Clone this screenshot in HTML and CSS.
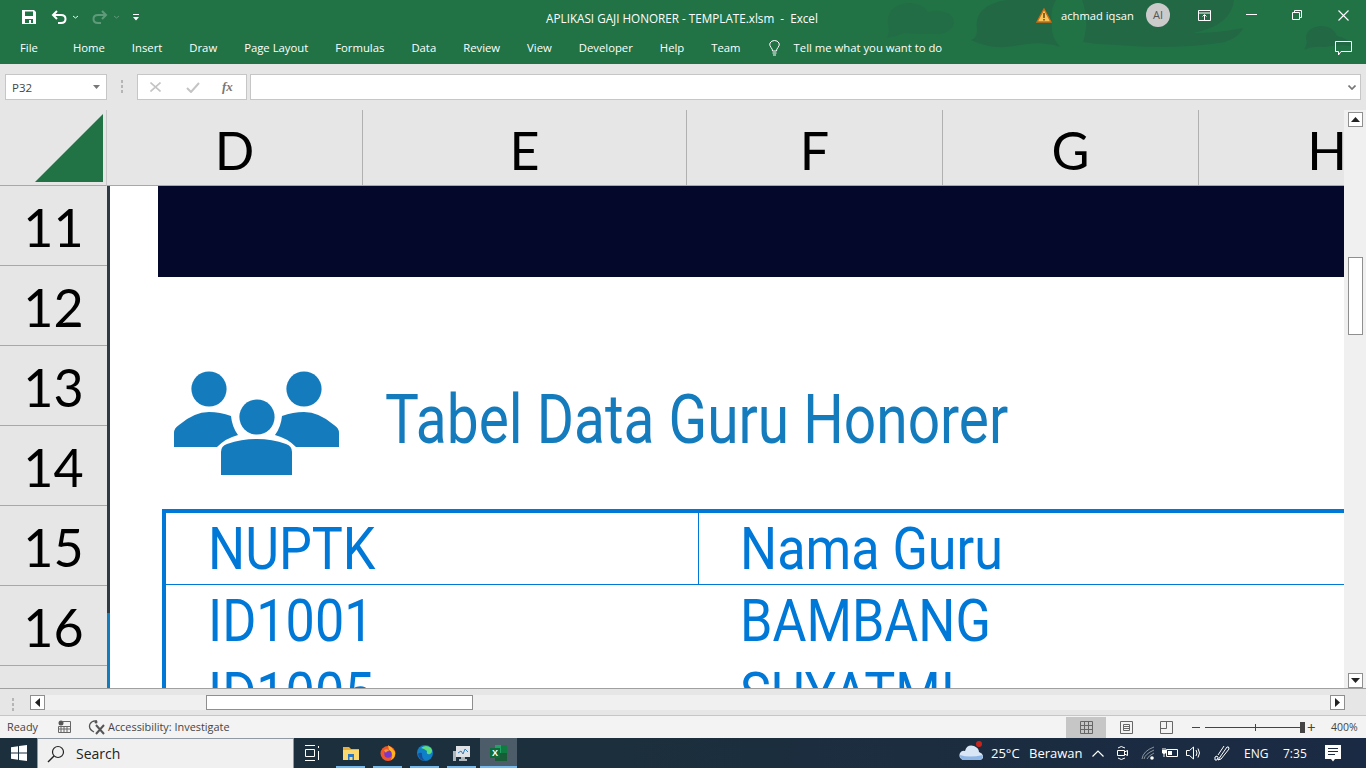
FILE: index.html
```html
<!DOCTYPE html>
<html lang="en">
<head>
<meta charset="utf-8">
<title>APLIKASI GAJI HONORER - TEMPLATE.xlsm - Excel</title>
<link rel="stylesheet" href="styles.css">
</head>
<body>
<div class="app">
  <header class="ribbon">
    <svg class="blobs" width="1366" height="64" viewBox="0 0 1366 64">
      <path class="blob-faint" d="M887 38Q890 32 888 24Q886 6 908 3Q922 3 928 12Q945 8 953 18Q957 30 940 34Q915 34 904 33Q895 37 887 38Z"/>
      <path d="M971 40Q977 38 977 30Q974 12 992 4Q1005 -2 1025 0H1056Q1050 10 1052 22Q1050 36 1060 47Q1040 40 1015 46Q990 50 971 40Z"/>
      <path d="M1082 0H1234Q1232 25 1193 33Q1220 33 1243 28Q1240 37 1225 42Q1180 50 1116 45Q1100 45 1083 42Q1090 20 1082 0Z"/>
      <path d="M1304 50Q1308 44 1306 38Q1306 28 1320 26Q1333 25 1337 36Q1348 38 1352 46Q1340 44 1325 47Q1312 46 1304 50Z"/>
    </svg>
    <div class="qat">
      <svg class="q-save" width="16" height="16" viewBox="0 0 16 16"><path fill="#fff" d="M1 1H13L15 3V15H1Z"/><path fill="#217346" d="M4 2.500H12V7H4ZM4 10H12V14H10V11H8V14H4Z"/></svg>
      <svg class="q-undo" width="16" height="14" viewBox="0 0 16 14"><path fill="none" stroke="#fff" stroke-width="2" d="M6 1L2 5L6 9M2 5H10Q14.500 5 14.500 9Q14.500 13 10 13H7"/></svg>
      <svg class="q-caret" width="5" height="4" viewBox="0 0 5 4"><path fill="none" stroke="#dfe" stroke-width="1" d="M0 1L2.500 3L5 1"/></svg>
      <svg class="q-redo" width="16" height="14" viewBox="0 0 16 14"><path fill="none" stroke="#5f9a7b" stroke-width="2" d="M10 1L14 5L10 9M14 5H6Q1.500 5 1.500 9Q1.500 13 6 13H9"/></svg>
      <svg class="q-caret2" width="5" height="4" viewBox="0 0 5 4"><path fill="none" stroke="#5f9a7b" stroke-width="1" d="M0 1L2.500 3L5 1"/></svg>
      <svg class="q-more" width="6" height="7" viewBox="0 0 6 7"><path fill="#fff" d="M0 0H6V1H0ZM0 3H6L3 6.500Z"/></svg>
    </div>
    <div class="title">APLIKASI GAJI HONORER - TEMPLATE.xlsm&nbsp; - &nbsp;Excel</div>
    <div class="account">
      <svg class="warn" width="16" height="15" viewBox="0 0 16 15"><path fill="#f6c65b" stroke="#cf6a12" stroke-width="1.400" d="M8 1L15 14H1Z"/><path fill="#5a3a10" d="M7.300 5H8.700V10H7.300ZM7.300 11H8.700V12.500H7.300Z"/></svg>
      <span class="user">achmad iqsan</span>
      <span class="avatar">AI</span>
      <svg class="w-display" width="13" height="11" viewBox="0 0 13 11"><path fill="none" stroke="#fff" d="M.5 .5H12.500V10.500H.5ZM.5 3H12.500M6.500 10V5M4.500 6.500L6.500 4.500L8.500 6.500"/></svg>
      <svg class="w-min" width="11" height="1" viewBox="0 0 11 1"><path fill="#fff" d="M0 0H11V1H0Z"/></svg>
      <svg class="w-restore" width="10" height="10" viewBox="0 0 10 10"><path fill="none" stroke="#fff" d="M.5 2.500H7.500V9.500H.5ZM2.500 2.500V.5H9.500V7.500H7.500"/></svg>
      <svg class="w-close" width="11" height="11" viewBox="0 0 11 11"><path fill="none" stroke="#fff" stroke-width="1.100" d="M.5 .5L10.500 10.500M10.500 .5L.5 10.500"/></svg>
    </div>
    <nav class="tabs">
      <span class="tab tab-file">File</span>
      <span class="tab">Home</span>
      <span class="tab">Insert</span>
      <span class="tab">Draw</span>
      <span class="tab">Page Layout</span>
      <span class="tab">Formulas</span>
      <span class="tab">Data</span>
      <span class="tab">Review</span>
      <span class="tab">View</span>
      <span class="tab">Developer</span>
      <span class="tab">Help</span>
      <span class="tab">Team</span>
      <svg class="bulb" width="13" height="16" viewBox="0 0 13 16"><path fill="none" stroke="#fff" d="M4.500 11Q4.500 9 3 7.500Q1 5 2 3Q3.500 .5 6.500 .5Q9.500 .5 11 3Q12 5 10 7.500Q8.500 9 8.500 11ZM4.500 13H8.500M5 15H8"/></svg>
      <span class="tab tab-tell">Tell me what you want to do</span>
    </nav>
    <svg class="comment" width="17" height="15" viewBox="0 0 17 15"><path fill="none" stroke="#fff" d="M.5 .5H16.500V10.500H6L3.500 14V10.500H.5Z"/></svg>
  </header>

  <section class="formula">
    <div class="namebox"><span>P32</span><svg width="7" height="4" viewBox="0 0 7 4"><path fill="#777" d="M0 0H7L3.500 4Z"/></svg></div>
    <div class="grip"><i></i><i></i><i></i></div>
    <div class="fx-box">
      <svg width="11" height="10" viewBox="0 0 11 10"><path fill="none" stroke="#c4c4c4" stroke-width="1.600" d="M.5 .5L10.500 9.500M10.500 .5L.5 9.500"/></svg>
      <svg width="14" height="11" viewBox="0 0 14 11"><path fill="none" stroke="#c4c4c4" stroke-width="2" d="M1 6L5 10L13 1"/></svg>
      <span class="fx">fx</span>
    </div>
    <div class="input"><svg width="8" height="5" viewBox="0 0 8 5"><path fill="none" stroke="#777" stroke-width="1.700" d="M.5 .5L4 4L7.500 .5"/></svg></div>
  </section>

  <section class="workbook">
    <div class="corner"><svg width="68" height="68" viewBox="0 0 68 68"><path fill="#217346" d="M68 0V68H0Z"/></svg></div>
    <div class="columns">
      <div class="col col-d">D</div>
      <div class="col col-e">E</div>
      <div class="col col-f">F</div>
      <div class="col col-g">G</div>
      <div class="col col-h">H</div>
    </div>
    <div class="vscroll">
      <button class="sbtn"><svg width="9" height="5" viewBox="0 0 9 5"><path fill="#222" d="M4.500 0L9 5H0Z"/></svg></button>
      <div class="vthumb"></div>
      <button class="sbtn sbtn-bottom"><svg width="9" height="5" viewBox="0 0 9 5"><path fill="#222" d="M4.500 5L9 0H0Z"/></svg></button>
    </div>
    <div class="rows">
      <div class="row">11</div>
      <div class="row">12</div>
      <div class="row">13</div>
      <div class="row">14</div>
      <div class="row">15</div>
      <div class="row">16</div>
      <div class="row"></div>
    </div>
    <div class="sheet">
      <div class="band"></div>
      <div class="heading">
        <svg class="people" width="170" height="106" viewBox="0 0 170 106">
          <g fill="#147bbd">
            <circle cx="37" cy="18" r="17.600"/>
            <circle cx="132" cy="18" r="17.600"/>
            <circle cx="85" cy="46" r="17.600"/>
            <path d="M2 76V62Q2 57 7 54Q22 41 37 41Q48 41 59 45Q60 56 66 64Q54 67 45 76Z"/>
            <path d="M167 76V62Q167 57 162 54Q147 41 132 41Q121 41 110 45Q109 56 103 64Q115 67 124 76Z"/>
            <path d="M49 104V81Q49 75 55 73Q70 68 85 68Q100 68 114 73Q120 75 120 81V104Z"/>
          </g>
        </svg>
        <h1 class="h-title">Tabel Data Guru Honorer</h1>
      </div>
      <div class="table">
        <div class="t-row t-head">
          <div class="cell cell-a"><span>NUPTK</span></div>
          <div class="cell cell-b"><span>Nama Guru</span></div>
        </div>
        <div class="t-row">
          <div class="cell cell-a"><span>ID1001</span></div>
          <div class="cell cell-b"><span>BAMBANG</span></div>
        </div>
        <div class="t-row">
          <div class="cell cell-a"><span>ID1005</span></div>
          <div class="cell cell-b"><span>SUYATMI</span></div>
        </div>
      </div>
    </div>
  </section>

  <section class="hbar">
    <div class="grip grip-h"><i></i><i></i><i></i></div>
    <div class="htrack">
      <button class="sbtn"><svg width="5" height="9" viewBox="0 0 5 9"><path fill="#222" d="M0 4.500L5 0V9Z"/></svg></button>
      <div class="hthumb"></div>
      <button class="sbtn sbtn-right"><svg width="5" height="9" viewBox="0 0 5 9"><path fill="#222" d="M5 4.500L0 0V9Z"/></svg></button>
    </div>
  </section>

  <footer class="status">
    <span class="ready">Ready</span>
    <svg class="st-macro" width="13" height="13" viewBox="0 0 13 13"><circle cx="3" cy="3" r="2.500" fill="#555"/><path fill="none" stroke="#666" d="M5 1.500H12.500V12.500H.5V6.500H12.500M3 7V12M6 7V12M9 7V12M1 9H12"/></svg>
    <svg class="st-acc" width="18" height="16" viewBox="0 0 18 16"><path fill="none" stroke="#555" stroke-width="1.300" d="M9 2Q4 1 2 5Q0 10 6 13"/><circle cx="8" cy="3" r="1.500" fill="#555"/><path fill="none" stroke="#555" stroke-width="2" d="M8 6L16 15M16 6L8 15"/></svg>
    <span class="acc-text">Accessibility: Investigate</span>
    <div class="views">
      <span class="view view-on"><svg width="13" height="13" viewBox="0 0 13 13"><path fill="none" stroke="#666" d="M.5 .5H12.500V12.500H.5ZM4.500 .5V12.500M8.500 .5V12.500M.5 4.500H12.500M.5 8.500H12.500"/></svg></span>
      <span class="view"><svg width="13" height="13" viewBox="0 0 13 13"><path fill="none" stroke="#666" d="M.5 .5H12.500V12.500H.5ZM3.500 3.500H9.500V9.500H3.500ZM3.500 5.500H9.500M3.500 7.500H9.500"/></svg></span>
      <span class="view"><svg width="13" height="13" viewBox="0 0 13 13"><path fill="none" stroke="#666" d="M.5 .5H12.500V12.500H.5ZM6.500 .5V7.500H.5"/></svg></span>
    </div>
    <span class="z-minus"></span>
    <div class="slider"><i class="s-tick"></i><i class="s-thumb"></i></div>
    <span class="z-plus">+</span>
    <span class="zoom">400%</span>
  </footer>

  <footer class="taskbar">
    <div class="start"><svg width="16" height="16" viewBox="0 0 16 16"><path fill="#fff" d="M0 2.300L7 1.300V7.500H0ZM8 1.100L16 0V7.500H8ZM0 8.500H7V14.700L0 13.700ZM8 8.500H16V16L8 14.900Z"/></svg></div>
    <div class="search">
      <svg width="18" height="18" viewBox="0 0 18 18"><circle cx="11" cy="7" r="5.500" fill="none" stroke="#222" stroke-width="1.200"/><path stroke="#222" stroke-width="1.400" d="M7 11L1 17"/></svg>
      <span>Search</span>
    </div>
    <div class="task-view"><svg width="17" height="16" viewBox="0 0 17 16"><path fill="none" stroke="#fff" d="M2 .5H12M2.500 4.500H11.500V11.500H2.500ZM2 15.500H12M15.500 1V3M15.500 6V15"/></svg></div>
    <div class="apps">
      <span class="app-i"><svg width="16" height="15" viewBox="0 0 16 15"><path fill="#e8b03a" d="M0 1H6L8 3H16V14H0Z"/><path fill="#fbd96f" d="M0 4H16V14H0Z"/><path fill="#2a76c4" d="M5 8H11V14H9.500V11H6.500V14H5Z"/></svg></span>
      <span class="app-i"><svg width="16" height="16" viewBox="0 0 16 16"><circle cx="8" cy="8.500" r="7.500" fill="#f0552b"/><path fill="#ffb61e" d="M8 0Q13 3 15 7Q16 12 11 15Q14 9 9 5Z"/><circle cx="8" cy="9" r="3.700" fill="#7b37c9"/><path fill="#ff9a2a" d="M4 5Q8 3 9 6Q6 6 6 8Z"/></svg></span>
      <span class="app-i"><svg width="16" height="16" viewBox="0 0 16 16"><circle cx="8" cy="8" r="8" fill="#0f7fc8"/><path fill="#5fdc7e" d="M4 3Q9 -1 14 3Q16.500 7 13 9Q9 10 10 6Q7 3.500 4 3Z"/><path fill="#1a4f9a" d="M1 9Q2 15 9 16Q4 13 5 8Q2 7 1 9Z"/></svg></span>
      <span class="app-i"><svg width="17" height="15" viewBox="0 0 17 15"><path fill="#dfe3e6" d="M3 0H17V11H3Z"/><path fill="none" stroke="#2f7cc0" d="M5 7L8 5L10 8L12 3L15 6"/><path fill="#aeb6bb" d="M0 5H3V15H0ZM8 11H12V13H14V15H6V13H8Z"/></svg></span>
      <span class="app-i app-on"><svg width="17" height="16" viewBox="0 0 17 16"><path fill="#21a366" d="M5 0H17V16H5Z"/><path fill="#107c41" d="M11 0H17V8H11Z"/><path fill="#185c37" d="M5 8H17V16H5Z"/><path fill="#0f6b3a" d="M0 3H10V13H0Z"/><text class="x-text" x="5" y="11.300">X</text></svg></span>
    </div>
    <div class="tray">
      <svg class="tr-cloud" width="24" height="20" viewBox="0 0 24 20"><circle cx="20" cy="3" r="3" fill="#c8241c"/><path fill="#d9e6f5" d="M4 19Q-1 17 1 12Q3 9 6 10Q8 3 15 5Q20 7 20 11Q25 13 24 17Q23 19 20 19Z"/><path fill="#8fb7e6" d="M1 14Q10 17 24 14Q24 19 20 19H4Q1 18 1 14Z"/></svg>
      <span class="tr-temp">25°C</span>
      <span class="tr-wx">Berawan</span>
      <svg class="tr-caret" width="12" height="7" viewBox="0 0 12 7"><path fill="none" stroke="#fff" stroke-width="1.200" d="M.5 6.500L6 1L11.500 6.500"/></svg>
      <svg class="tr-meet" width="11" height="16" viewBox="0 0 11 16"><path fill="none" stroke="#fff" d="M.5 5.500H7.500V10.500H.5ZM7.500 7L10.500 5.500V10.500L7.500 9M1 3Q4 0 8 3M1 13Q4 16 8 13"/></svg>
      <svg class="tr-wifi" width="14" height="14" viewBox="0 0 14 14"><g fill="none" stroke="#8a949c"><path d="M1 13Q2 5 13 1M3 13Q4 8 13 4M6 13Q7 10 13 7"/></g><circle cx="11" cy="12" r="1.800" fill="#fff"/></svg>
      <svg class="tr-batt" width="16" height="12" viewBox="0 0 16 12"><path fill="none" stroke="#fff" d="M4.500 2.500H15.500V9.500H4.500ZM1 3V1M3 3V1"/><path fill="#fff" d="M0 3H4V6L2.500 7V10H1.500V7L0 6ZM6 4H10V8H6Z"/></svg>
      <svg class="tr-vol" width="16" height="14" viewBox="0 0 16 14"><path fill="none" stroke="#fff" d="M.5 4.500H3.500L7.500 1V13L3.500 9.500H.5ZM10 4Q12 7 10 10M12 2.500Q15 7 12 11.500"/></svg>
      <svg class="tr-pen" width="16" height="16" viewBox="0 0 16 16"><path fill="none" stroke="#fff" d="M4 15L13 2Q15 1 15 4L7 14ZM10 1L4 10M1 15Q0 11 3 11Q5 12 3 15H1"/></svg>
      <span class="tr-lang">ENG</span>
      <span class="tr-time">7:35</span>
      <svg class="tr-note" width="16" height="17" viewBox="0 0 16 17"><path fill="#fff" d="M0 0H16V14H10L8 16.500L6 14H0Z"/><path fill="#1c2b40" d="M3 3H13V4H3ZM3 6H13V7H3ZM3 9H10V10H3Z"/></svg>
    </div>
  </footer>
</div>
</body>
</html>
```
FILE: styles.css
```css
* { box-sizing: border-box; }
html, body { margin: 0; padding: 0; height: 100%; overflow: hidden; background: #e6e6e6; }
button { padding: 0; font: inherit; }
svg { display: block; flex: none; }

.app {
  width: 1366px;
  height: 768px;
  display: flex;
  flex-direction: column;
  font-family: "Open Sans", "Noto Sans", sans-serif;
  overflow: hidden;
}

/* Ribbon */
.ribbon {
  position: relative;
  height: 64px;
  flex: none;
  background: #217346;
  color: #fff;
  overflow: hidden;
}
.blobs { position: absolute; left: 0; top: 0; fill: #236844; }
.blob-faint { fill: #226d45; }
.qat {
  position: absolute;
  left: 21px;
  top: 9px;
  display: flex;
  align-items: center;
  height: 16px;
}
.q-undo { margin-left: 14px; }
.q-caret { margin-left: 6px; }
.q-redo { margin-left: 14px; }
.q-caret2 { margin-left: 6px; }
.q-more { margin-left: 14px; }
.title {
  position: absolute;
  left: 0;
  right: 0;
  top: 9px;
  text-align: center;
  font-size: 11.700px;
  line-height: 18px;
  padding-right: 2px;
}
.account {
  position: absolute;
  left: 1036px;
  top: 3px;
  height: 24px;
  display: flex;
  align-items: center;
}
.user { font-size: 11.200px; margin-left: 9px; width: 74px; white-space: nowrap; }
.avatar {
  width: 24px;
  height: 24px;
  margin-left: 11px;
  border-radius: 50%;
  background: #cbcbcb;
  color: #555;
  font-size: 11px;
  line-height: 24px;
  text-align: center;
}
.w-display { margin-left: 28px; }
.w-min { margin-left: 35px; margin-top: -2px; }
.w-restore { margin-left: 35px; }
.w-close { margin-left: 36px; }
.tabs {
  position: absolute;
  left: 20px;
  top: 38px;
  display: flex;
  align-items: center;
  gap: 27px;
  height: 18px;
  font-size: 11.300px;
  white-space: nowrap;
}
.tab-file { margin-right: 8px; }
.bulb { margin-top: 2px; }
.tab-tell { margin-left: -14px; }
.comment { position: absolute; left: 1335px; top: 41px; }

/* Formula bar */
.formula {
  height: 46px;
  flex: none;
  background: #e6e6e6;
  display: flex;
  align-items: flex-start;
  padding: 10px 5px 0;
}
.namebox {
  width: 102px;
  height: 26px;
  background: #fff;
  border: 1px solid #c6c6c6;
  display: flex;
  align-items: center;
  justify-content: space-between;
  padding: 0 6px;
  font-size: 11.500px;
  color: #444;
}
.grip {
  width: 3px;
  display: flex;
  flex-direction: column;
  gap: 2px;
  margin: 6px 13px 0 14px;
}
.grip i { display: block; width: 2px; height: 3px; background: #b5b5b5; }
.fx-box {
  width: 110px;
  height: 26px;
  background: #fff;
  border: 1px solid #c6c6c6;
  display: flex;
  align-items: center;
  gap: 25px;
  padding: 0 12px;
}
.fx { font: italic bold 13px "Liberation Serif", serif; color: #777; margin-left: -3px; }
.input {
  width: 1111px;
  height: 26px;
  margin-left: 3px;
  background: #fff;
  border: 1px solid #c6c6c6;
  display: flex;
  align-items: center;
  justify-content: flex-end;
  padding-right: 4px;
}

/* Workbook grid */
.workbook {
  height: 578px;
  flex: none;
  display: grid;
  grid-template-columns: 107px 1237px 22px;
  grid-template-rows: 76px 502px;
  background: #e6e6e6;
  overflow: hidden;
}
.corner {
  border-bottom: 1px solid #a8a8a8;
  border-right: 1px solid #c9c9c9;
  display: flex;
  justify-content: flex-end;
  align-items: flex-end;
  padding: 0 3px 3px 0;
}
.columns {
  display: flex;
  overflow: hidden;
  border-bottom: 1px solid #a8a8a8;
  font-family: "Lato", "Open Sans", sans-serif;
  font-size: 52px;
  line-height: 80px;
  color: #000;
}
.col {
  flex: none;
  text-align: center;
  border-right: 1px solid #b0b0b0;
}
.col-d { width: 256px; }
.col-e { width: 324px; }
.col-f { width: 256px; }
.col-g { width: 256px; }
.col-h { width: 256px; border-right: 0; }
.vscroll {
  grid-row: 1 / 3;
  grid-column: 3;
  position: relative;
  background: #f0f0f0;
}
.sbtn {
  display: flex;
  align-items: center;
  justify-content: center;
  width: 15px;
  height: 15px;
  background: #fff;
  border: 1px solid #8f8f8f;
}
.vscroll .sbtn { position: absolute; left: 4px; top: 2px; }
.vscroll .sbtn-bottom { top: auto; bottom: 0; }
.vthumb {
  position: absolute;
  left: 4px;
  top: 147px;
  width: 15px;
  height: 78px;
  background: #fff;
  border: 1px solid #8f8f8f;
}
.rows {
  overflow: hidden;
  font-family: "Lato", "Open Sans", sans-serif;
  font-size: 52px;
  color: #000;
}
.row {
  height: 80px;
  line-height: 82px;
  text-align: center;
  border-bottom: 1px solid #a8a8a8;
}
.sheet {
  background: #fff;
  overflow: hidden;
  border-left: 3px solid #2e3a44;
  border-image: linear-gradient(#2e3a44 426px, #147bbd 426px) 1;
  border-top: 0;
  border-right: 0;
  border-bottom: 0;
  padding-left: 48px;
}
.band { height: 91px; background: #04082a; }
.heading {
  display: flex;
  align-items: center;
  height: 104px;
  margin-top: 94px;
  padding-left: 14px;
}
.people { margin-top: 2px; }
.h-title {
  margin: -6px 0 0 43px;
  font: 400 68px/1 "Roboto", sans-serif;
  color: #147bbd;
  white-space: nowrap;
  transform: scaleX(.836);
  transform-origin: left center;
}
.table {
  margin: 34px 0 0 4px;
  border-left: 4px solid #0078d7;
  border-top: 4px solid #0078d7;
  color: #0078d7;
  font: 400 60px/1 "Roboto", sans-serif;
  width: 1300px;
}
.t-row { display: flex; height: 73px; }
.t-head { height: 72px; border-bottom: 1px solid #0078d7; }
.cell {
  white-space: nowrap;
  padding-top: 6px;
}
.cell span { display: inline-block; transform: scaleX(.868); transform-origin: left center; }
.cell-a { width: 533px; padding-left: 42px; }
.t-head .cell-a { border-right: 1px solid #0078d7; }
.cell-b { padding-left: 41px; }

/* Horizontal scrollbar row */
.hbar {
  height: 28px;
  flex: none;
  background: #e6e6e6;
  display: flex;
  align-items: flex-start;
  padding-top: 6px;
  border-bottom: 1px solid #c6c6c6;
  border-top: 1px solid #a0a0a0;
}
.grip-h { margin: 3px 15px 0 12px; }
.htrack {
  position: relative;
  width: 1315px;
  height: 15px;
  background: #f0f0f0;
}
.hthumb {
  position: absolute;
  left: 176px;
  top: 0;
  width: 267px;
  height: 15px;
  background: #fff;
  border: 1px solid #8f8f8f;
}
.sbtn-right { position: absolute; right: 0; top: 0; }

/* Status bar */
.status {
  height: 22px;
  flex: none;
  background: #f3f3f3;
  display: flex;
  align-items: center;
  font-size: 10.900px;
  color: #444;
  padding-bottom: 1px;
}
.ready { margin-left: 7px; width: 32px; }
.st-macro { margin-left: 19px; }
.st-acc { margin-left: 17px; }
.acc-text { margin-left: 2px; white-space: nowrap; }
.views { position: absolute; left: 1066px; top: 717px; display: flex; height: 21px; }
.view { width: 40px; height: 21px; display: flex; align-items: center; justify-content: center; }
.view-on { background: #c6c6c6; }
.z-minus { position: absolute; left: 1192px; top: 727px; width: 8px; height: 1px; background: #444; }
.slider { position: absolute; left: 1205px; top: 727px; width: 98px; height: 1px; background: #444; }
.s-tick { position: absolute; left: 50px; top: -3px; width: 1px; height: 7px; background: #444; }
.s-thumb { position: absolute; left: 95px; top: -5px; width: 5px; height: 11px; background: #444; }
.z-plus { position: absolute; left: 1307px; top: 718px; font-size: 15px; line-height: 18px; color: #444; }
.zoom { position: absolute; left: 1331px; top: 720px; font-size: 10.500px; line-height: 14px; }

/* Taskbar */
.taskbar {
  flex: 1;
  display: flex;
  background: linear-gradient(90deg, #1c2f3c, #1c2f3c 45%, #1a2a44);
  color: #fff;
  font-size: 13px;
}
.start { width: 37px; display: flex; align-items: center; justify-content: center; }
.search {
  width: 257px;
  background: #f0f0f0;
  color: #222;
  display: flex;
  align-items: center;
  gap: 11px;
  padding-left: 9px;
  font-size: 14px;
  border: 1px solid #8f9aa2;
  border-bottom: 0;
}
.task-view { width: 38px; display: flex; align-items: center; padding-left: 9px; }
.apps { display: flex; }
.app-i {
  width: 37px;
  display: flex;
  align-items: center;
  justify-content: center;
  position: relative;
}
.app-i::after {
  content: "";
  position: absolute;
  left: 4px;
  right: 4px;
  bottom: 0;
  height: 2px;
  background: #76b9ed;
}
.app-on { background: #4c5c68; }
.app-on::after { left: 0; right: 0; }
.x-text { font: 700 9px "Liberation Sans", sans-serif; fill: #fff; text-anchor: middle; }
.tray { position: absolute; left: 959px; top: 738px; height: 30px; display: flex; align-items: center; white-space: nowrap; }
.tr-cloud { margin-top: -4px; }
.tr-temp { margin-left: 8px; width: 38px; }
.tr-wx { width: 63px; }
.tr-meet { margin-left: 13px; }
.tr-wifi { margin-left: 13px; }
.tr-batt { margin-left: 7px; }
.tr-vol { margin-left: 8px; }
.tr-pen { margin-left: 12px; }
.tr-lang { margin-left: 14px; width: 39px; font-size: 12px; }
.tr-time { width: 42px; font-size: 12px; }
```
